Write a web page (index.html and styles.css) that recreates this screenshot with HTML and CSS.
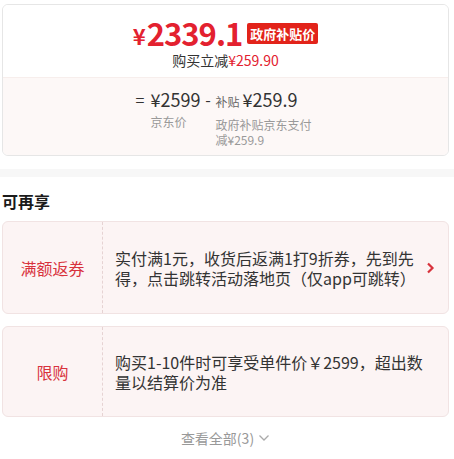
FILE: index.html
```html
<!DOCTYPE html>
<html lang="zh-CN">
<head>
<meta charset="utf-8">
<link rel="stylesheet" href="styles.css">
</head>
<body>
<div class="wrap">
  <div class="price-card">
    <div class="price-top">
      <div class="price-row">
        <span class="yen">¥</span><span class="amount">2339.1</span><span class="badge">政府补贴价</span>
      </div>
      <div class="save">购买立减<span class="red">¥259.90</span></div>
    </div>
    <div class="price-bottom">
      <div class="formula">
        <div class="op">=</div>
        <div class="col">
          <div class="num">¥2599</div>
          <div class="lbl">京东价</div>
        </div>
        <div class="op minus">-</div>
        <div class="col col-sub">
          <div class="num"><span class="tag">补贴</span>¥259.9</div>
          <div class="lbl">政府补贴京东支付减¥259.9</div>
        </div>
      </div>
    </div>
  </div>
</div>
<div class="sep"></div>
<div class="wrap">
  <div class="section-title">可再享</div>
  <div class="promo promo-link">
    <div class="promo-name">满额返券</div>
    <div class="promo-desc">实付满1元，收货后返满1打9折券，先到先得，点击跳转活动落地页（仅app可跳转）</div>
    <div class="promo-arrow">
      <svg width="9" height="12" viewBox="0 0 9 12"><path d="M2 1.5 L6.5 6 L2 10.5" fill="none" stroke="#d8323c" stroke-width="2.2"/></svg>
    </div>
  </div>
  <div class="promo promo-limit">
    <div class="promo-name">限购</div>
    <div class="promo-desc">购买1-10件时可享受单件价￥2599，超出数量以结算价为准</div>
  </div>
  <div class="more">查看全部(3)<svg width="12" height="8" viewBox="0 0 12 8"><path d="M1.5 1.5 L6 6 L10.5 1.5" fill="none" stroke="#aaa" stroke-width="1.3"/></svg></div>
</div>
</body>
</html>
```

FILE: styles.css
```css
html, body {
  margin: 0;
  padding: 0;
  background: #fff;
  font-family: "Noto Sans CJK SC", "Noto Sans", sans-serif;
  color: #333;
}

.wrap {
  padding: 4px 5px 0 2px;
}

.price-card {
  border: 1px solid #e6e6e6;
  border-radius: 6px;
  overflow: hidden;
}

.price-top {
  background: #fff;
  padding: 9px 0 8px;
  text-align: center;
}

.price-row {
  display: flex;
  justify-content: center;
  align-items: center;
  height: 36px;
  color: #e3212f;
}

.yen {
  font-size: 22px;
  font-weight: 700;
  line-height: 1;
  margin-top: 6px;
  margin-right: 1px;
}

.amount {
  font-size: 31px;
  font-weight: 700;
  letter-spacing: -1px;
  line-height: 1;
}

.badge {
  margin-left: 5px;
  margin-top: 3px;
  background: #e2231a;
  color: #fff;
  font-size: 13px;
  font-weight: 700;
  line-height: 21px;
  padding: 0 3px;
  border-radius: 2px;
}

.save {
  font-size: 14px;
  line-height: 18px;
  color: #333;
  margin-top: 1px;
}

.red {
  color: #e3212f;
}

.price-bottom {
  background: #fdf8f7;
  border-top: 1px solid #f7eeec;
  padding: 9px 0 8px;
}

.formula {
  display: flex;
  justify-content: center;
  align-items: flex-start;
}

.op {
  font-size: 16px;
  line-height: 24px;
  color: #333;
  width: 15px;
}

.minus {
  width: 15px;
  text-align: center;
}

.col {
  display: flex;
  flex-direction: column;
}

.col-sub {
  width: 100px;
}

.num {
  font-size: 18px;
  line-height: 24px;
  color: #333;
  white-space: nowrap;
}

.tag {
  font-size: 12px;
  color: #666;
  margin-right: 3px;
}

.lbl {
  margin-top: 3px;
  font-size: 12px;
  line-height: 15px;
  color: #999;
}

.sep {
  margin-top: 13px;
  height: 8px;
  background: #f7f7f7;
}

.section-title {
  margin-top: 8px;
  font-size: 16px;
  font-weight: 700;
  line-height: 24px;
  color: #1a1a1a;
}

.promo {
  margin-top: 8px;
  display: flex;
  align-items: stretch;
  background: #fcf4f4;
  border: 1px solid #f1e3e3;
  border-radius: 6px;
}

.promo + .promo {
  margin-top: 12px;
}

.promo-name {
  width: 99px;
  flex: none;
  display: flex;
  align-items: center;
  justify-content: center;
  border-right: 1px dashed #e6d3d3;
  color: #d8323c;
  font-size: 16px;
}

.promo-desc {
  flex: 1;
  padding: 26px 20px 25px 12px;
  font-size: 16px;
  line-height: 20px;
  color: #333;
}

.promo-link .promo-desc {
  padding-right: 8px;
}

.promo-limit .promo-desc {
  padding-top: 25px;
  padding-bottom: 24px;
}

.promo-arrow {
  flex: none;
  width: 22px;
  display: flex;
  align-items: center;
}

.more {
  display: flex;
  justify-content: center;
  align-items: center;
  gap: 4px;
  margin-top: 11px;
  font-size: 14px;
  line-height: 20px;
  color: #999;
}
```
